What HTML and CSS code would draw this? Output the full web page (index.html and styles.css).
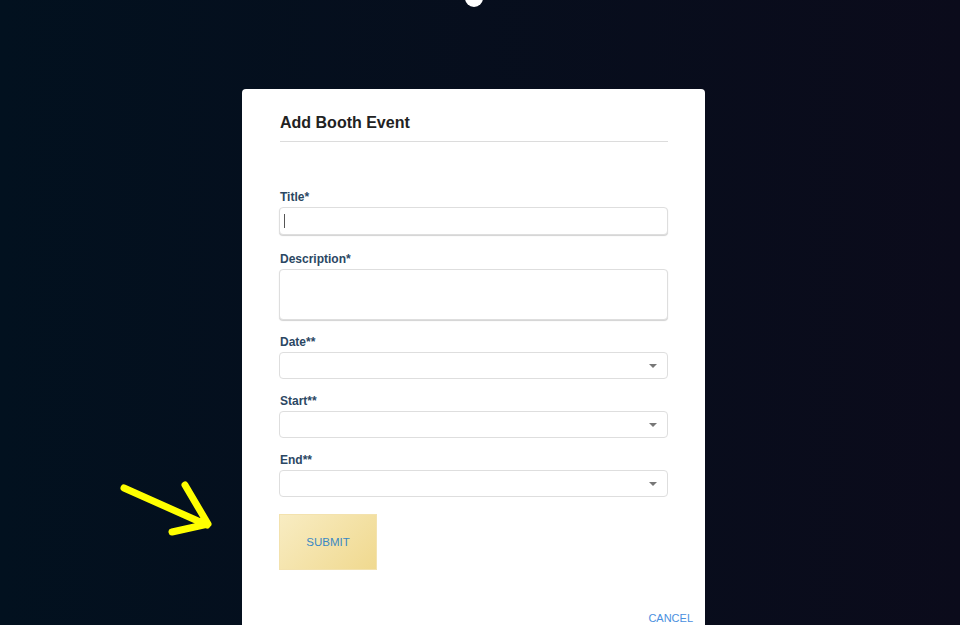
FILE: index.html
```html
<!DOCTYPE html>
<html lang="en">
  <head>
    <meta charset="UTF-8" />
    <meta name="viewport" content="width=device-width, initial-scale=1.0" />
    <title>Add Booth Event</title>
    <link rel="stylesheet" href="styles.css">
  </head>
  <body>
    <!-- top avatar dot -->
    <div class="top-dot"></div>

    <!-- annotation arrow -->
    <svg class="pointer-arrow" width="120" height="70" viewBox="110 475 120 70">
      <path d="M124 488 L207 525 M185 485 L208 524 L172 532" fill="none" stroke="#ffff00" stroke-width="7" stroke-linecap="round" stroke-linejoin="round" />
    </svg>

    <div class="modal">
      <h2 class="modal-title">Add Booth Event</h2>

      <form class="event-form">
        <div class="field field-title">
          <label for="title">Title*</label>
          <div class="input-wrapper">
            <input type="text" id="title" class="text-input" />
            <span class="caret"></span>
          </div>
        </div>

        <div class="field">
          <label for="description">Description*</label>
          <textarea id="description" class="text-input textarea"></textarea>
        </div>

        <div class="field">
          <label>Date**</label>
          <div class="select"><span class="select-arrow"></span></div>
        </div>

        <div class="field">
          <label>Start**</label>
          <div class="select"><span class="select-arrow"></span></div>
        </div>

        <div class="field">
          <label>End**</label>
          <div class="select"><span class="select-arrow"></span></div>
        </div>

        <button type="button" class="submit-btn">SUBMIT</button>
      </form>

      <div class="modal-footer">
        <button type="button" class="cancel-btn">CANCEL</button>
      </div>
    </div>
  </body>
</html>
```

FILE: styles.css
```css
* {
  box-sizing: border-box;
}

body {
  font-family: "Liberation Sans", Arial, sans-serif;
  margin: 0;
  padding: 0;
  height: 625px;
  background: linear-gradient(to right, #02111f, #0b0b1b);
  position: relative;
  overflow: hidden;
}

.top-dot {
  position: absolute;
  top: -11px;
  left: 465px;
  width: 18px;
  height: 18px;
  border-radius: 50%;
  background: #fff;
}

.pointer-arrow {
  position: absolute;
  left: 110px;
  top: 475px;
}

/* modal */
.modal {
  width: 463px;
  height: 560px;
  margin: 89px 0 0 242px;
  padding: 25px 12px 0 37px;
  background: #fff;
  border-radius: 4px;
}

.modal-title {
  margin: 0 25px 0 1px;
  padding-bottom: 9px;
  font-size: 16px;
  font-weight: bold;
  color: #222;
  border-bottom: 1px solid #dcdcdc;
}

.event-form {
  display: flex;
  flex-direction: column;
  align-items: flex-start;
  margin: 48px 25px 0 0;
}

.field {
  width: 100%;
  display: flex;
  flex-direction: column;
  margin-bottom: 15px;
}

.field-title {
  margin-bottom: 17px;
}

.field label {
  font-size: 12px;
  line-height: 14px;
  font-weight: bold;
  color: #2b4763;
  margin: 0 0 3px 1px;
}

.input-wrapper {
  position: relative;
}

.text-input {
  display: block;
  width: 100%;
  height: 28px;
  margin: 0;
  padding: 0 8px;
  font-family: inherit;
  font-size: 13px;
  border: 1px solid #dedede;
  border-radius: 4px;
  box-shadow: 0 1px 1px rgba(0, 0, 0, 0.18);
  background: #fff;
  outline: none;
}

.textarea {
  height: 51px;
  resize: none;
}

.caret {
  position: absolute;
  left: 5px;
  top: 7px;
  width: 1px;
  height: 14px;
  background: #555;
}

.select {
  height: 27px;
  display: flex;
  align-items: center;
  justify-content: flex-end;
  padding-right: 10px;
  border: 1px solid #dedede;
  border-radius: 4px;
  background: #fff;
}

.select-arrow {
  width: 0;
  height: 0;
  border-left: 4.5px solid transparent;
  border-right: 4.5px solid transparent;
  border-top: 4px solid #777;
}

.submit-btn {
  width: 98px;
  height: 56px;
  margin-top: 2px;
  padding: 0;
  font-family: inherit;
  font-size: 11.5px;
  color: #3a88c4;
  background: linear-gradient(135deg, #f8ecc2, #f0d98f);
  border: 1px solid #f3e2ae;
  cursor: pointer;
}

.modal-footer {
  display: flex;
  justify-content: flex-end;
  margin-top: 42px;
}

.cancel-btn {
  padding: 0;
  font-family: inherit;
  font-size: 11px;
  color: #4a8fe0;
  background: none;
  border: none;
  cursor: pointer;
}
```
